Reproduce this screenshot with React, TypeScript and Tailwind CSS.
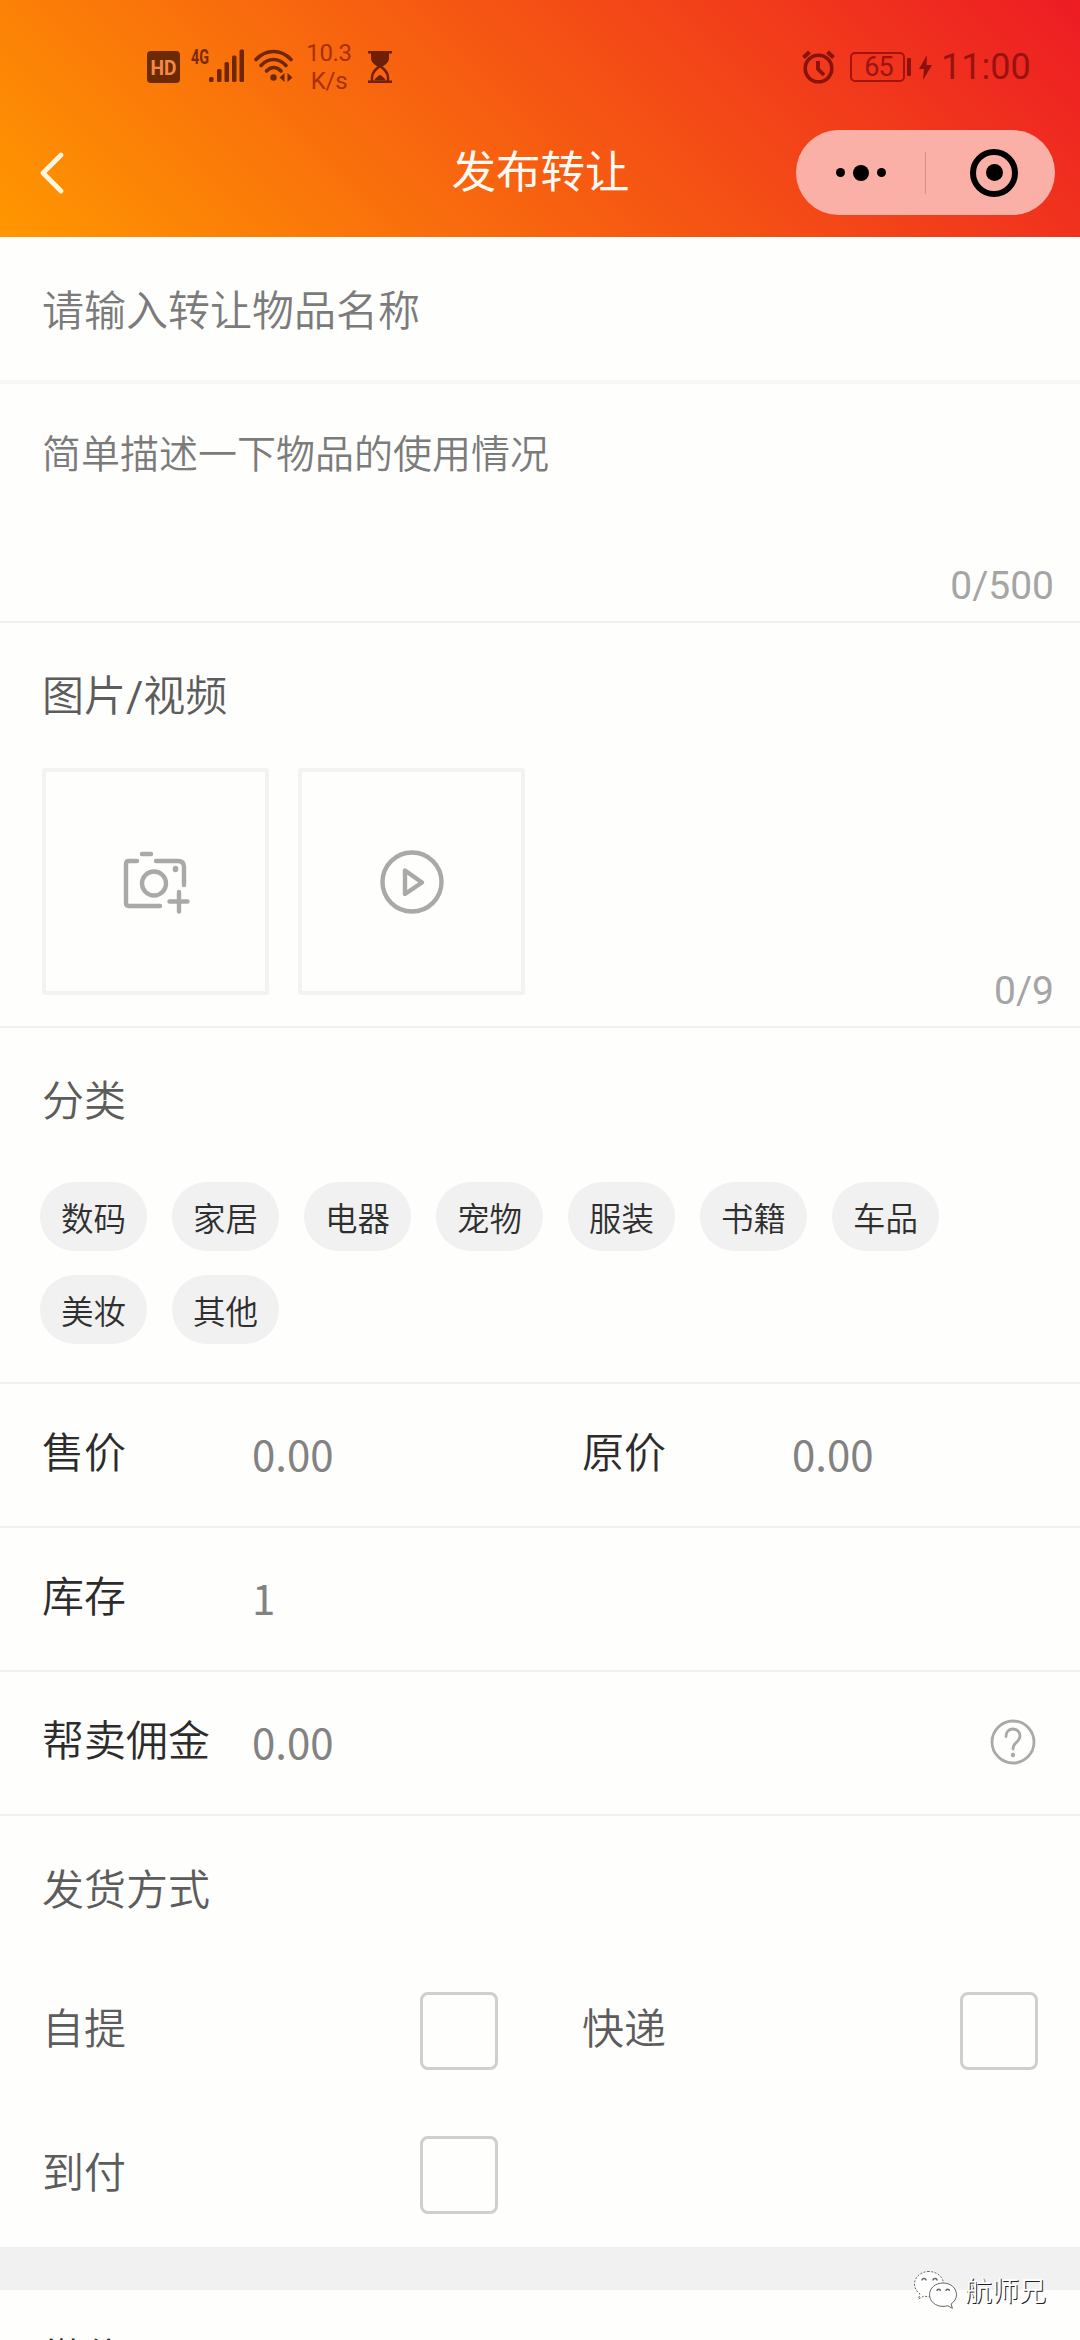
import React from "react";

const categories = ["数码", "家居", "电器", "宠物", "服装", "书籍", "车品", "美妆", "其他"];

function StatusBar() {
  return (
    <div className="flex h-[108px] justify-between pt-[42px] pl-[147px] pr-[50px] font-[Roboto,sans-serif] font-normal text-black/50">
      <div className="flex h-[50px]">
        <svg className="mt-[9px] h-[32px] w-[33px]" viewBox="0 0 33 32">
          <rect width="33" height="32" rx="4" fill="#6b2a04" />
          <text x="16.5" y="23.5" textAnchor="middle" textLength="26" lengthAdjust="spacingAndGlyphs" fontFamily="Roboto" fontWeight="700" fontSize="20" fill="#f58a45">HD</text>
        </svg>
        <svg className="ml-[11px] mt-[6px] h-[36px] w-[54px] overflow-visible" viewBox="0 0 54 36">
          <text x="0" y="16" textLength="18" lengthAdjust="spacingAndGlyphs" fontFamily="Roboto" fontWeight="700" fontSize="20" fill="#7a2a04">4G</text>
          <g fill="#6e2604">
            <rect x="18" y="29" width="4.5" height="5" rx="1.5" />
            <rect x="26" y="21" width="4.5" height="13" rx="1.5" />
            <rect x="33.5" y="14" width="4.5" height="20" rx="1.5" />
            <rect x="41" y="7.5" width="4.5" height="26.5" rx="1.5" />
            <rect x="48.5" y="1.5" width="4.5" height="32.5" rx="1.5" />
          </g>
        </svg>
        <svg className="ml-[9px] mt-[7px] h-[36px] w-[40px]" viewBox="0 0 40 36" fill="none" stroke="#6e2604" strokeWidth="3.6" strokeLinecap="round">
          <path d="M2 10.5C12 -.2 27-.2 37 10.5" />
          <path d="M7 16.5C14.5 8.5 24.5 8.5 32 16.5" />
          <path d="M12.5 22C17 17.5 22.5 17.5 27 22" />
          <circle cx="19.5" cy="28.5" r="3.2" fill="#6e2604" stroke="none" />
          <path d="M25.500 28.500l5-4.500v9zM38.500 28.500l-5-4.500v9z" fill="#6e2604" stroke="none" />
        </svg>
        <div className="ml-[12px] flex w-[46px] flex-col text-center text-[24px] leading-[28px] tracking-[-0.3px] text-[#a83008]">
          <span className="-mt-[3px]">10.3</span>
          <span>K/s</span>
        </div>
        <svg className="ml-[16px] mt-[9px] h-[32px] w-[24px]" viewBox="0 0 24 32" fill="#6e1f04">
          <rect width="24" height="2.5" />
          <rect y="29.5" width="24" height="2.5" />
          <path d="M3 2h18v5c0 4-3 6.500-7 9h-4c-4-2.500-7-5-7-9z" />
          <path d="M4 30v-4c0-5 4-8 8-11 4 3 8 6 8 11v4" fill="none" stroke="#6e1f04" strokeWidth="2.4" />
          <path d="M6 29.500c2-3 4-4.500 6-5.500 2 1 4 2.500 6 5.500z" />
        </svg>
      </div>
      <div className="flex h-[50px] items-center">
        <svg className="h-[34px] w-[33px]" viewBox="0 0 33 34" fill="none" stroke="#8a120c" strokeWidth="3.6">
          <circle cx="16.5" cy="18.5" r="13.3" />
          <path d="M16 11v8l6 6" strokeWidth="3.8" />
          <path d="M1.500 7.500l6-5.500M31.500 7.500l-6-5.500" strokeWidth="4" />
        </svg>
        <div className="ml-[15px] flex h-[30px] w-[55px] items-center justify-center rounded-[5px] border-2 border-[#a5130f] pl-[2px] text-[27px] tracking-[-1px] text-[#9c130f]">65</div>
        <div className="ml-[2px] h-[18px] w-[4px] rounded-[1px] bg-[#8a120c]" />
        <svg className="ml-[8px] h-[25px] w-[13px]" viewBox="0 0 13 25" fill="#8a120c">
          <path d="M8 0L0 14h5l-1 11 9-15H7.500z" />
        </svg>
        <span className="ml-[9px] w-[89px] whitespace-nowrap text-[36px] leading-[50px] text-[#98130f]">11:00</span>
      </div>
    </div>
  );
}

function NavBar() {
  return (
    <div className="flex h-[129px] items-center pl-[38px] pr-[25px]">
      <div className="w-[258px]">
        <svg className="h-[44px] w-[28px]" viewBox="0 0 28 44" fill="none" stroke="#fff6e0" strokeWidth="4.8" strokeLinecap="round" strokeLinejoin="round">
          <path d="M23 4L5 22l18 18" />
        </svg>
      </div>
      <h1 className="flex-1 pb-[7px] text-center text-[44.5px] font-normal leading-[60px] text-[#fffaf4]">
        <span className="ml-[-11px]">发布转让</span>
      </h1>
      <div className="flex h-[85px] w-[259px] items-center rounded-full bg-[#fab0a6]">
        <div className="flex h-full w-[129px] items-center justify-center gap-[8px]">
          <i className="h-[9px] w-[9px] rounded-full bg-black" />
          <i className="h-[16px] w-[16px] rounded-full bg-black" />
          <i className="h-[9px] w-[9px] rounded-full bg-black" />
        </div>
        <div className="h-[42px] w-px bg-[#d98f88]" />
        <div className="flex flex-1 justify-center pl-[7px]">
          <div className="flex h-[48px] w-[48px] items-center justify-center rounded-full border-[6px] border-black">
            <i className="h-[17px] w-[17px] rounded-full bg-black" />
          </div>
        </div>
      </div>
    </div>
  );
}

function Field({ label, value }: { label: string; value: string }) {
  return (
    <div className="flex w-[540px] items-center pl-[42px]">
      <span className="mb-[11px] w-[210px] text-[42px] leading-[60px] text-[#2c2c2c]">{label}</span>
      <span className="mb-[4px] text-[42px] font-normal leading-[60px] text-[#828282]">{value}</span>
    </div>
  );
}

function CheckField({ label }: { label: string }) {
  return (
    <div className="flex h-[144px] items-center justify-between pl-[42px] pr-[42px]">
      <span className="mb-[11px] text-[42px] leading-[60px] text-[#5c5c5c]">{label}</span>
      <span className="h-[78px] w-[78px] rounded-[8px] border-[3px] border-[#cfcfcf]" />
    </div>
  );
}

function Watermark() {
  return (
    <div className="absolute left-[913px] top-[2270px] flex items-center">
      <svg className="h-[40px] w-[46px]" viewBox="0 0 46 40" fill="#fefefe" stroke="#666" strokeWidth="1">
        <path d="M16 1.500C8 1.500 1.500 7 1.500 14c0 4 2 7.500 5.500 10l-1.500 5 5.500-3c1.500.5 3.500.7 5 .7 8 0 14.500-5.500 14.500-12.500S24 1.500 16 1.500z" strokeDasharray="2 1.500" />
        <path d="M30 13c-7.500 0-13.500 5-13.500 11.700S22.500 36.400 30 36.400c1.600 0 3.200-.2 4.600-.7l4.800 2.600-1.300-4.300c3.300-2.200 5.400-5.500 5.400-9.300C43.500 18 37.500 13 30 13z" />
        <g fill="none" strokeWidth="1.4">
          <path d="M9 10.500a2 2 0 0 1 4 0M20 10.500a2 2 0 0 1 4 0M24 21a1.700 1.700 0 0 1 3.400 0M33 21a1.700 1.700 0 0 1 3.400 0" />
        </g>
      </svg>
      <span className="ml-[6px] text-[27px] leading-[40px] text-white [text-shadow:1px_1px_0_#222]">航师兄</span>
    </div>
  );
}

export default function App() {
  return (
    <div className="relative flex h-[2340px] w-[1080px] flex-col overflow-hidden bg-[#fefefd] font-['Noto_Sans_CJK_SC',sans-serif] font-[350]">
      <header className="h-[237px] shrink-0 bg-[linear-gradient(45deg,#ff9700,#ed1c24)]">
        <StatusBar />
        <NavBar />
      </header>

      <section className="flex h-[147px] shrink-0 items-center border-b-4 border-[#f7f7f7] pb-[2px] pl-[42px] text-[42px] text-[#7b7b7b]">
        请输入转让物品名称
      </section>

      <section className="flex h-[239px] shrink-0 flex-col justify-between border-b-2 border-[#f0f0f0] pl-[42px] pr-[26px] pt-[37px] pb-[15px]">
        <p className="text-[39px] leading-[60px] text-[#7b7b7b]">简单描述一下物品的使用情况</p>
        <span className="self-end font-[Roboto,sans-serif] text-[39px] font-normal leading-[40px] text-[#a5a5a5]">0/500</span>
      </section>

      <section className="h-[405px] shrink-0 border-b-2 border-[#f0f0f0] pl-[42px] pr-[26px] pt-[40px]">
        <h2 className="h-[60px] text-[42px] leading-[60px] text-[#5c5c5c]">
          图片<span className="font-[Roboto,sans-serif] font-normal leading-none">/</span>视频
        </h2>
        <div className="mt-[45px] flex h-[227px] gap-[29px]">
          <div className="flex w-[227px] items-center justify-center rounded-[3px] border-4 border-[#f3f3f3]">
            <svg className="ml-[1px] h-[64px] w-[68px]" viewBox="0 0 68 64" fill="none" stroke="#a9a9a9" strokeWidth="4.4" strokeLinecap="round" strokeLinejoin="round">
              <path d="M20 4h9M15 11H7q-3 0-3 3v39q0 3 3 3h31M34 11h22q6 0 6 6v18" />
              <circle cx="32" cy="33.5" r="12" />
              <path d="M47.500 51.500h18M57 42v19.500" />
              <path d="M53.500 18.500v1" strokeWidth="5.5" />
            </svg>
          </div>
          <div className="flex w-[227px] items-center justify-center rounded-[3px] border-4 border-[#f3f3f3]">
            <svg className="h-[64px] w-[64px]" viewBox="0 0 64 64" fill="none" stroke="#a9a9a9" strokeWidth="4.4" strokeLinejoin="round">
              <circle cx="32" cy="32" r="29.5" />
              <path d="M25 20.500v23.500l17-11.500z" />
            </svg>
          </div>
          <span className="-mb-[16px] ml-auto self-end font-[Roboto,sans-serif] text-[39px] font-normal leading-[40px] text-[#a5a5a5]">0/9</span>
        </div>
      </section>

      <section className="h-[356px] shrink-0 border-b-2 border-[#f0f0f0] pl-[40px] pr-[30px] pt-[40px]">
        <h2 className="pl-[2px] text-[42px] leading-[60px] text-[#5c5c5c]">分类</h2>
        <div className="mt-[54px] flex flex-wrap gap-x-[25px] gap-y-[24px]">
          {categories.map((c) => (
            <span key={c} className="flex h-[69px] w-[107px] items-center justify-center rounded-full bg-[#f1f1f1] text-[32.5px] leading-[48px] text-[#2f2f2f]">
              {c}
            </span>
          ))}
        </div>
      </section>

      <section className="flex h-[144px] shrink-0 border-b-2 border-[#f0f0f0]">
        <Field label="售价" value="0.00" />
        <Field label="原价" value="0.00" />
      </section>
      <section className="flex h-[144px] shrink-0 border-b-2 border-[#f0f0f0]">
        <Field label="库存" value="1" />
      </section>
      <section className="flex h-[144px] shrink-0 justify-between border-b-2 border-[#f0f0f0] pr-[44px]">
        <Field label="帮卖佣金" value="0.00" />
        <svg className="mb-[2px] h-[46px] w-[46px] self-center" viewBox="0 0 46 46" fill="none" stroke="#a9a9a9" strokeWidth="2.8" strokeLinecap="round">
          <circle cx="23" cy="23" r="21" />
          <path d="M16 17.500c0-4.500 3-7.500 7-7.500s7 3 7 7c0 3-2 5-4 6.800-2 1.800-3 3.200-3 6.200" />
          <circle cx="23" cy="36" r="2.2" fill="#a9a9a9" stroke="none" />
        </svg>
      </section>

      <section className="h-[431px] shrink-0 pt-[41px]">
        <h2 className="pl-[42px] text-[42px] leading-[60px] text-[#5c5c5c]">发货方式</h2>
        <div className="mt-[42px] grid grid-cols-2">
          <CheckField label="自提" />
          <CheckField label="快递" />
          <CheckField label="到付" />
        </div>
      </section>

      <div className="h-[43px] shrink-0 bg-[#f1f1f1]" />
      <section className="h-[50px] shrink-0 overflow-hidden pl-[42px] pt-[36px]">
        <h2 className="text-[42px] leading-[60px] text-[#2c2c2c]">微信</h2>
      </section>
      <Watermark />
    </div>
  );
}
